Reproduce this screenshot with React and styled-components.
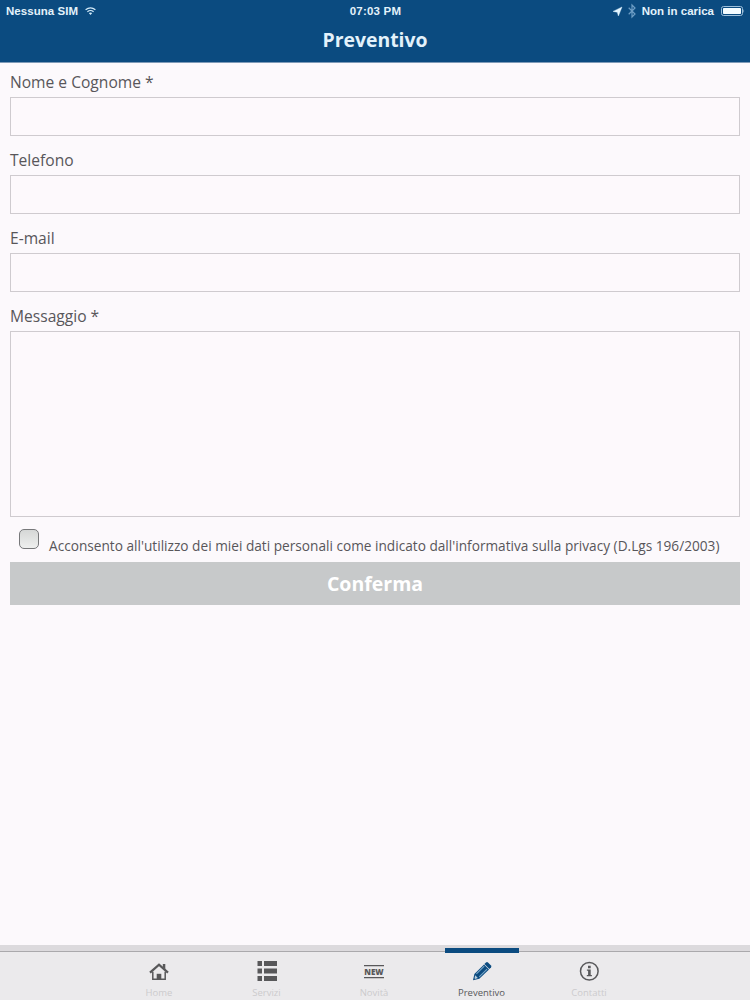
import styled, { ThemeProvider, createGlobalStyle } from 'styled-components';

const theme = {
    colors: {
        primary: '#0b4b80',
        background: '#fcf9fc',
        text: '#58565a',
        border: '#cfcbcf',
        disabled: '#c7c9ca',
        bar: '#ebeaec',
        icon: '#58585a',
        muted: '#cbcacc',
    },
};

const GlobalStyle = createGlobalStyle`
    * { box-sizing: border-box; }
    body {
        margin: 0;
        font-family: "Open Sans", "Noto Sans", sans-serif;
        color: #58565a;
        background: #fcf9fc;
    }
`;

const Screen = styled.div`
    height: 1000px;
    width: 750px;
    display: flex;
    flex-direction: column;
    overflow: hidden;
    background: ${(props) => props.theme.colors.background};
`;

const Header = styled.header`
    height: 63px;
    flex: none;
    background: ${(props) => props.theme.colors.primary};
    border-bottom: 1px solid #7f9bb8;
    color: #e3f2fb;
`;

const StatusBar = styled.div`
    height: 21px;
    display: grid;
    grid-template-columns: 1fr auto 1fr;
    align-items: center;
    padding: 1px 5px 0 6px;
    font-family: "Liberation Sans", Arial, sans-serif;
    font-size: 11.5px;
    line-height: 20px;
    font-weight: 700;
`;

const StatusGroup = styled.div`
    display: flex;
    align-items: center;
    gap: ${(props) => props.$gap || '7px'};
    justify-content: ${(props) => props.$align || 'flex-start'};
`;

const StatusText = styled.span`
    white-space: nowrap;
    letter-spacing: ${(props) => props.$spacing || '0'};
`;

const Title = styled.h1`
    margin: 0;
    font-size: 19.4px;
    line-height: 38px;
    font-weight: 700;
    text-align: center;
`;

const Form = styled.form`
    flex: 1;
    padding: 6px 10px 0;
`;

const Field = styled.label`
    display: block;
    margin-bottom: ${(props) => props.$gap || '11px'};
`;

const FieldName = styled.span`
    display: block;
    height: 28px;
    font-size: 15.6px;
    line-height: 27px;
`;

const Input = styled.input`
    display: block;
    width: 100%;
    height: 39px;
    border: 1px solid ${(props) => props.theme.colors.border};
    border-radius: 0;
    background: #fdf9fc;
    outline: none;
`;

const TextArea = styled(Input)`
    height: 186px;
    resize: none;
`;

const Consent = styled.label`
    display: flex;
    align-items: flex-start;
    gap: 10px;
    height: 33px;
    padding-left: 9px;
    font-size: 13.67px;
    white-space: nowrap;
`;

const Checkbox = styled.input`
    appearance: none;
    flex: none;
    width: 20px;
    height: 20px;
    margin: 0;
    border: 1px solid #77787a;
    border-radius: 5px;
    background: linear-gradient(#d5d7d6, #eeefee);
`;

const ConsentText = styled.span`
    line-height: 20px;
    padding-top: 7px;
`;

const Submit = styled.button`
    display: block;
    width: 100%;
    height: 43px;
    padding: 1px 0 0;
    border: 0;
    background: ${(props) => props.theme.colors.disabled};
    color: #fff;
    font: 700 19.5px/42px "Open Sans", sans-serif;
`;

const TabBar = styled.nav`
    flex: none;
    height: 55px;
    border-top: 6px solid #dcdadd;
    background: ${(props) => props.theme.colors.bar};
`;

const Tabs = styled.div`
    display: flex;
    justify-content: center;
    gap: 32.5px;
    height: 49px;
    border-top: 1px solid #aaa9ac;
    padding-right: 2px;
`;

const Tab = styled.div`
    position: relative;
    width: 75px;
    display: flex;
    flex-direction: column;
    align-items: center;
    padding-top: 9px;
    color: ${(props) => (props.$active ? props.theme.colors.primary : props.theme.colors.icon)};
`;

// Sits across the top border of the bar
const Indicator = styled.span`
    position: absolute;
    top: -4px;
    left: 1px;
    width: 74px;
    height: 5px;
    background: ${(props) => props.theme.colors.primary};
`;

const TabName = styled.span`
    margin-top: 5px;
    font-size: 9.5px;
    line-height: 13px;
    color: ${(props) => (props.$active ? props.theme.colors.icon : props.theme.colors.muted)};
`;

const Icon = styled.svg`
    display: block;
    flex: none;
    overflow: visible;
`;

const WifiIcon = () => (
    <Icon width="11" height="8" viewBox="0 0 11 8" fill="none" stroke="#d8eefb" strokeWidth="1.2">
        <path d="M.6 2.8Q5.5-1.2 10.4 2.8M2.4 4.8Q5.5 2.2 8.6 4.8" />
        <path d="M3.8 6.1Q5.5 4.8 7.2 6.1L5.5 8Z" fill="#d8eefb" stroke="none" />
    </Icon>
);

const LocationIcon = () => (
    <Icon width="9" height="9" viewBox="0 0 9 9" fill="#e3f5ff">
        <path d="M9 0 5.4 9 4.3 5.2 0 4.4Z" stroke="#e3f5ff" strokeWidth=".4" />
    </Icon>
);

const BluetoothIcon = () => (
    <Icon width="8" height="14" viewBox="0 0 8 14" fill="none" stroke="#6d9dc4" strokeWidth="1.2">
        <path d="M.7 3.8 7 10 4 13V1l3 3L.7 10.2" />
    </Icon>
);

const BatteryIcon = () => (
    <Icon width="25" height="10" viewBox="0 0 25 10">
        <rect x="1.5" y=".5" width="21" height="9" rx="2" fill="none" stroke="#9dbfda" />
        <rect x="3" y="2" width="18" height="6" rx=".7" fill="#f4fcff" />
        <path d="M23.5 3q1.3 2 0 4Z" fill="#b9d4e7" />
    </Icon>
);

const HomeIcon = () => (
    <Icon width="20" height="20" viewBox="0 0 20 20">
        <path d="M1 11.6 10 3.7l9 7.9" fill="none" stroke="currentColor" strokeWidth="2.3" />
        <path d="M13.8 3h2.5v5.5l-2.5-2.2Z" fill="currentColor" />
        <path d="M3.8 10.8v7.5h12.4v-7.5" fill="none" stroke="currentColor" strokeWidth="1.5" />
        <path d="M7.7 12.8h4.6V18H7.7Z" fill="currentColor" />
    </Icon>
);

const ListIcon = () => (
    <Icon width="20" height="20" viewBox="0 0 20 20" fill="currentColor">
        <path d="M.5 0h4.5v5H.5zM7 0h13v5H7zM.5 7.5h4.5v5H.5zM7 7.5h13v5H7zM.5 15h4.5v5H.5zM7 15h13v5H7z" />
    </Icon>
);

const NewIcon = () => (
    <Icon width="24" height="20" viewBox="0 0 24 20" fill="currentColor">
        <path d="M2 4h20v1.2H2zM2 16h20v1.2H2z" />
        <text x="2.3" y="14" textLength="19.4" lengthAdjust="spacingAndGlyphs" fontFamily="Open Sans" fontWeight="800" fontSize="9.3">NEW</text>
    </Icon>
);

const PencilIcon = () => (
    <Icon width="20" height="20" viewBox="0 0 20 20">
        <path d="M1 19.3 2.4 13 12 3.4l5 5-9.7 9.4Z" fill="currentColor" />
        <path d="m12.4 2.9 1.6-1.5q1-.8 2 0l3 3q.8 1 0 2l-1.6 1.5Z" fill="currentColor" />
        <path d="m4.4 12.9 7.8-7.7M7.2 15.9l7.9-7.7" stroke="#78a6c7" strokeWidth="1.1" />
        <path d="m3.2 14.3 2.7 2.8-2.8.8-.6-.7Z" fill="#b7cddc" />
    </Icon>
);

const InfoIcon = () => (
    <Icon width="20" height="20" viewBox="0 0 20 20">
        <circle cx="10.3" cy="10.3" r="8.8" fill="none" stroke="currentColor" strokeWidth="1.5" />
        <path d="M9 4.8h2.7v2.4H9zM7.9 8.5h3.8V14h1.2v1.2H7.8V14h1.3V9.7H7.9Z" fill="currentColor" />
    </Icon>
);

const fields = [
    { name: 'nome', label: 'Nome e Cognome *' },
    { name: 'telefono', label: 'Telefono' },
    { name: 'email', label: 'E-mail' },
];

const tabs = [
    { label: 'Home', icon: HomeIcon },
    { label: 'Servizi', icon: ListIcon },
    { label: 'Novità', icon: NewIcon },
    { label: 'Preventivo', icon: PencilIcon, active: true },
    { label: 'Contatti', icon: InfoIcon },
];

export default function App() {
    return (
        <ThemeProvider theme={theme}>
            <GlobalStyle />
            <Screen>
                <Header>
                    <StatusBar>
                        <StatusGroup>
                            <StatusText $spacing="0.05px">Nessuna SIM</StatusText>
                            <WifiIcon />
                        </StatusGroup>
                        <StatusText $spacing="0.2px">07:03 PM</StatusText>
                        <StatusGroup $align="flex-end" $gap="6px">
                            <LocationIcon />
                            <BluetoothIcon />
                            <StatusText>Non in carica</StatusText>
                            <BatteryIcon />
                        </StatusGroup>
                    </StatusBar>
                    <Title>Preventivo</Title>
                </Header>
                <Form>
                    {fields.map((field) => (
                        <Field key={field.name}>
                            <FieldName>{field.label}</FieldName>
                            <Input name={field.name} />
                        </Field>
                    ))}
                    <Field $gap="12px">
                        <FieldName>Messaggio *</FieldName>
                        <TextArea as="textarea" name="messaggio" />
                    </Field>
                    <Consent>
                        <Checkbox type="checkbox" />
                        <ConsentText>Acconsento all'utilizzo dei miei dati personali come indicato dall'informativa sulla privacy (D.Lgs 196/2003)</ConsentText>
                    </Consent>
                    <Submit type="button">Conferma</Submit>
                </Form>
                <TabBar>
                    <Tabs>
                        {tabs.map(({ label, icon: TabIcon, active }) => (
                            <Tab key={label} $active={active}>
                                {active && <Indicator />}
                                <TabIcon />
                                <TabName $active={active}>{label}</TabName>
                            </Tab>
                        ))}
                    </Tabs>
                </TabBar>
            </Screen>
        </ThemeProvider>
    );
}
